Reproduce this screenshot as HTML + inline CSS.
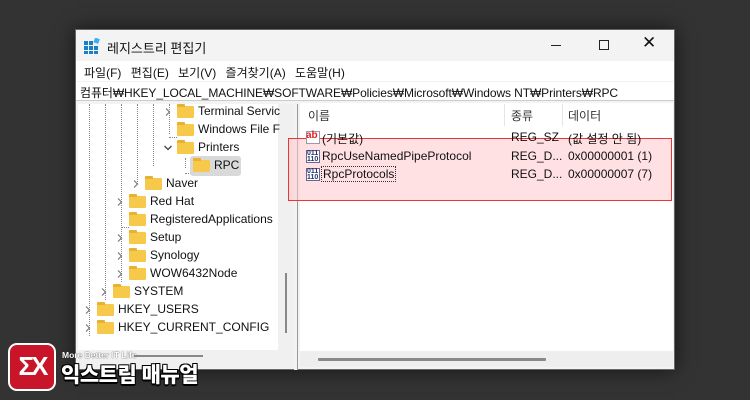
<!DOCTYPE html>
<html><head><meta charset="utf-8"><style>
*{margin:0;padding:0;box-sizing:border-box}
body{width:750px;height:400px;background:#333;position:relative;overflow:hidden;font-family:"Liberation Sans","Noto Sans CJK KR",sans-serif;font-size:12px;color:#111}
.a{position:absolute;white-space:nowrap}
.win{position:absolute;left:75px;top:29px;width:600px;height:341px;background:#f3f3f3;border:1px solid #666;box-shadow:0 0 18px rgba(0,0,0,.6)}
.fold{position:absolute;width:17px;height:12px;background:#f7c94a;border-radius:1px}
.fold:before{content:"";position:absolute;left:0;top:-2px;width:8px;height:3px;background:#e8b22e;border-radius:1px 1px 0 0}
.chev{position:absolute;width:10px;height:10px}
.dv{position:absolute;border-left:1px dotted #888}
.dh{position:absolute;border-top:1px dotted #888;width:8px}
</style></head><body>
<svg width="0" height="0" style="position:absolute"><defs><symbol id="cr" viewBox="0 0 10 10"><path d="M3 1.5 L6.5 5 L3 8.5" fill="none" stroke="#777" stroke-width="1.2"/></symbol><symbol id="cd" viewBox="0 0 10 10"><path d="M1.5 3 L5 6.5 L8.5 3" fill="none" stroke="#444" stroke-width="1.3"/></symbol></defs></svg>
<div class="win">
 <div class="a" style="left:0;top:0;width:598px;height:31px;background:#f3f3f3"></div>
 <svg class="a" style="left:8px;top:8px" width="16" height="16"><g fill="#1a7fc8"><rect x="0" y="3" width="4" height="4"/><rect x="5" y="3" width="4" height="4"/><rect x="0" y="8" width="4" height="4"/><rect x="5" y="8" width="4" height="4"/><rect x="10" y="8" width="4" height="4"/><rect x="0" y="13" width="4" height="3"/><rect x="5" y="13" width="4" height="3"/><rect x="10" y="13" width="4" height="3"/></g><rect x="10" y="0" width="5" height="5" fill="#3ab0f0" transform="rotate(20 12 3)"/></svg>
 <div class="a" style="left:31px;top:8px;font-size:13px">레지스트리 편집기</div>
 <div class="a" style="left:475px;top:15px;width:10px;height:1px;background:#222"></div>
 <div class="a" style="left:523px;top:10px;width:10px;height:10px;border:1px solid #222"></div>
 <div class="a" style="left:566px;top:3px;font-size:17px">✕</div>
 <div class="a" style="left:0;top:31px;width:598px;height:20px;background:#fff"></div>
 <div class="a" style="left:8px;top:34px;word-spacing:6px">파일(F) 편집(E) 보기(V) 즐겨찾기(A) 도움말(H)</div>
 <div class="a" style="left:0;top:52px;width:598px;height:19px;background:#fff;border-bottom:1px solid #ccc"></div>
 <div class="a" style="left:4px;top:54px;letter-spacing:-.1px">컴퓨터₩HKEY_LOCAL_MACHINE₩SOFTWARE₩Policies₩Microsoft₩Windows NT₩Printers₩RPC</div>
 <div class="a" style="left:2px;top:74px;width:200px;height:246px;background:#fff"></div>
 <div class="a" style="left:202px;top:74px;width:16px;height:264px;background:#f0f0f0"></div>
 <div class="a" style="left:209px;top:243px;width:2px;height:60px;background:#888"></div>
 <div class="a" style="left:2px;top:320px;width:200px;height:18px;background:#f0f0f0"></div>
 <div class="a" style="left:218px;top:74px;width:4px;height:266px;background:#f3f3f3;border-right:1px solid #999"></div>
 <div class="dv" style="left:13px;top:74px;height:232px"></div>
 <div class="dv" style="left:29px;top:74px;height:196px"></div>
 <div class="dv" style="left:45px;top:74px;height:178px"></div>
 <div class="dv" style="left:61px;top:74px;height:80px"></div>
 <div class="dv" style="left:77px;top:74px;height:62px"></div>
 <div class="dv" style="left:93px;top:74px;height:30px"></div>
 <div class="dh" style="left:93px;top:107px"></div>
 <div class="dv" style="left:109px;top:128px;height:10px"></div><div class="dh" style="left:109px;top:143px"></div>
 <div class="dh" style="left:45px;top:197px"></div>
</div>
<div class="a" style="left:190px;top:156px;width:51px;height:20px;background:#d9d9d9;border-radius:3px"></div>
<svg class="chev" style="left:163px;top:107px"><use href="#cr"/></svg><div class="fold" style="left:177px;top:106px"></div><div class="a" style="left:198px;top:104px">Terminal Servic</div>
<div class="fold" style="left:177px;top:124px"></div><div class="a" style="left:198px;top:122px">Windows File F</div>
<svg class="chev" style="left:163px;top:143px"><use href="#cd"/></svg><div class="fold" style="left:177px;top:142px"></div><div class="a" style="left:198px;top:140px">Printers</div>
<div class="fold" style="left:193px;top:160px"></div><div class="a" style="left:214px;top:158px">RPC</div>
<svg class="chev" style="left:131px;top:179px"><use href="#cr"/></svg><div class="fold" style="left:145px;top:178px"></div><div class="a" style="left:166px;top:176px">Naver</div>
<svg class="chev" style="left:115px;top:197px"><use href="#cr"/></svg><div class="fold" style="left:129px;top:196px"></div><div class="a" style="left:150px;top:194px">Red Hat</div>
<div class="fold" style="left:129px;top:214px"></div><div class="a" style="left:150px;top:212px">RegisteredApplications</div>
<svg class="chev" style="left:115px;top:233px"><use href="#cr"/></svg><div class="fold" style="left:129px;top:232px"></div><div class="a" style="left:150px;top:230px">Setup</div>
<svg class="chev" style="left:115px;top:251px"><use href="#cr"/></svg><div class="fold" style="left:129px;top:250px"></div><div class="a" style="left:150px;top:248px">Synology</div>
<svg class="chev" style="left:115px;top:269px"><use href="#cr"/></svg><div class="fold" style="left:129px;top:268px"></div><div class="a" style="left:150px;top:266px">WOW6432Node</div>
<svg class="chev" style="left:99px;top:287px"><use href="#cr"/></svg><div class="fold" style="left:113px;top:286px"></div><div class="a" style="left:134px;top:284px">SYSTEM</div>
<svg class="chev" style="left:83px;top:305px"><use href="#cr"/></svg><div class="fold" style="left:97px;top:304px"></div><div class="a" style="left:118px;top:302px">HKEY_USERS</div>
<svg class="chev" style="left:83px;top:323px"><use href="#cr"/></svg><div class="fold" style="left:97px;top:322px"></div><div class="a" style="left:118px;top:320px">HKEY_CURRENT_CONFIG</div>
<div class="a" style="left:300px;top:103px;width:373px;height:248px;background:#fff"></div>
<div class="a" style="left:300px;top:351px;width:373px;height:16px;background:#eee"></div>
<div class="a" style="left:318px;top:358px;width:228px;height:3px;background:#888;border-radius:1px"></div>
<div class="a" style="left:504px;top:104px;width:1px;height:22px;background:#e5e5e5"></div>
<div class="a" style="left:562px;top:104px;width:1px;height:22px;background:#e5e5e5"></div>
<div class="a" style="left:308px;top:107px;color:#333">이름</div>
<div class="a" style="left:511px;top:107px;color:#333">종류</div>
<div class="a" style="left:568px;top:107px;color:#333">데이터</div>
<div class="a" style="left:288px;top:138px;width:384px;height:63px;background:rgba(255,200,205,.55);border:1px solid #e33"></div>
<div class="a" style="left:306px;top:131px;width:14px;height:13px;background:#fff;border:1px solid #99a"></div><div class="a" style="left:306px;top:130px;color:#d22;font-size:10px;font-weight:bold">ab</div>
<div class="a" style="left:322px;top:130px">(기본값)</div><div class="a" style="left:511px;top:130px">REG_SZ</div><div class="a" style="left:568px;top:130px">(값 설정 안 됨)</div>
<div class="a" style="left:306px;top:150px;width:14px;height:13px;background:#fff;border:1px solid #669;font-size:7px;line-height:6px;color:#236;font-weight:bold">011<br>110</div>
<div class="a" style="left:322px;top:149px">RpcUseNamedPipeProtocol</div><div class="a" style="left:511px;top:149px">REG_D...</div><div class="a" style="left:568px;top:149px">0x00000001 (1)</div>
<div class="a" style="left:306px;top:168px;width:14px;height:13px;background:#fff;border:1px solid #669;font-size:7px;line-height:6px;color:#236;font-weight:bold">011<br>110</div>
<div class="a" style="left:321px;top:166px;border:1px dotted #333;padding:0 1px">RpcProtocols</div><div class="a" style="left:511px;top:167px">REG_D...</div><div class="a" style="left:568px;top:167px">0x00000007 (7)</div>
<div class="a" style="left:8px;top:343px;width:48px;height:48px;background:#c8152a;border-radius:9px;border:2px solid #fff;color:#fff;font-weight:bold;font-size:26px;line-height:42px;text-align:center;letter-spacing:-3px">ƩX</div>
<div class="a" style="left:62px;top:350px;font-size:8.5px;font-weight:bold;color:#fff;text-shadow:0 0 1px #000">More Better IT Life</div>
<div class="a" style="left:134px;top:355px;width:69px;height:2px;background:#888"></div>
<div class="a" style="left:61px;top:359px;font-size:21px;font-weight:900;color:#fff;text-shadow:-1px -1px 0 #000,1px -1px 0 #000,-1px 1px 0 #000,1px 1px 0 #000,0 2px 0 #000;letter-spacing:-.5px">익스트림 매뉴얼</div>
</body></html>
